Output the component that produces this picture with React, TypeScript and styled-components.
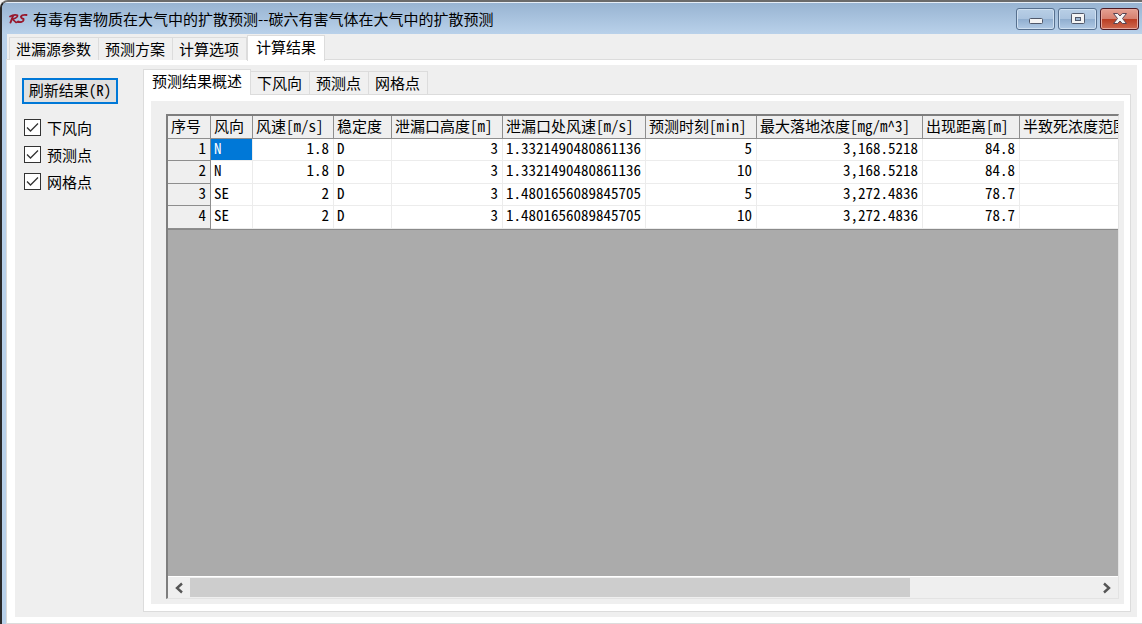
import React, { useState } from "react";
import styled, { createGlobalStyle } from "styled-components";

const sans = `"Noto Sans Mono CJK SC", "Noto Sans CJK SC", sans-serif`;

const GlobalStyle = createGlobalStyle`
  *, *::before, *::after { box-sizing: border-box; }
  body { margin: 0; background: #efefef; }
  button, input { font: inherit; color: inherit; }
`;

const Window = styled.main`
  display: flex;
  flex-direction: column;
  min-height: 100vh;
  border-top: 2px solid #6b6b6b;
  border-left: 2px solid #2a2a2a;
  border-top-left-radius: 8px;
  background: #b9d1ea;
  padding-left: 5px;
  font: 15px/20px ${sans};
  color: #000;
  overflow: hidden;
`;

const TitleBar = styled.header`
  display: flex;
  align-items: center;
  height: 32px;
  margin-left: -5px;
  padding: 1px 3px 0 6px;
  border-top: 1px solid #e6eef7;
  background: linear-gradient(#98b4d2, #b9d1ea);
`;

const Logo = styled.svg`
  flex: none;
  width: 20px;
  height: 14px;
  margin-right: 5px;
`;

const Title = styled.h1`
  flex: 1;
  min-width: 0;
  margin: 0;
  font: 15px/20px "Noto Sans CJK SC", sans-serif;
  white-space: nowrap;
  overflow: hidden;
`;

const Controls = styled.div`
  display: flex;
  gap: 3px;
`;

const WindowButton = styled.button<{ $danger?: boolean }>`
  display: grid;
  place-items: center;
  width: 39px;
  height: 22px;
  padding: 0;
  border: 1px solid ${(p) => (p.$danger ? "#4e1a22" : "#56708f")};
  border-radius: 3px;
  box-shadow: inset 0 0 0 1px ${(p) => (p.$danger ? "#e5a79c" : "#cfe0f1")};
  background: ${(p) =>
    p.$danger
      ? "linear-gradient(#e5a092 0, #d6806f 48%, #b93c22 50%, #cf6a50 100%)"
      : "linear-gradient(#b9cfe6 0, #abc4df 48%, #8fadce 50%, #b1cae5 100%)"};
`;

const Client = styled.div`
  display: flex;
  flex: 1;
  flex-direction: column;
  background: #efefef;
  border-bottom: 1px solid #dcdcdc;
`;

const TabList = styled.div<{ $inner?: boolean }>`
  display: flex;
  align-items: flex-end;
  height: ${(p) => (p.$inner ? 25 : 26)}px;
  padding-left: ${(p) => (p.$inner ? 0 : 2)}px;
`;

const Tab = styled.button<{ $active?: boolean }>`
  height: ${(p) => (p.$active ? 26 : 23)}px;
  margin-bottom: ${(p) => (p.$active ? -1 : 0)}px;
  padding: ${(p) => (p.$active ? "0 8px 4px" : "0 7px 0 6px")};
  border: 1px solid #dcdcdc;
  border-bottom: 0;
  border-left-width: ${(p) => (p.$active ? 1 : 0)}px;
  background: ${(p) => (p.$active ? "#fff" : "#f0f0f0")};
  line-height: 20px;
  white-space: nowrap;
  z-index: ${(p) => (p.$active ? 1 : 0)};
  &:first-child { border-left-width: 1px; }
`;

const OuterPage = styled.section`
  display: flex;
  flex: 1;
  border: solid #fff;
  border-width: 5px 5px 6px 8px;
  outline: 1px solid #dcdcdc;
  background: #efefef;
`;

const Sidebar = styled.aside`
  display: flex;
  flex: none;
  flex-direction: column;
  align-items: flex-start;
  width: 128px;
  padding: 13px 0 0 7px;
`;

const RefreshButton = styled.button`
  width: 96px;
  height: 26px;
  margin-bottom: 10px;
  padding: 0 0 2px;
  border: 2px solid #0078d7;
  background: #e1e1e1;
  line-height: 20px;
  white-space: nowrap;
`;

const CheckLabel = styled.label`
  display: flex;
  align-items: center;
  gap: 6px;
  height: 27px;
  padding-left: 2px;
`;

const CheckBox = styled.input`
  appearance: none;
  width: 17px;
  height: 17px;
  margin: 0;
  border: 1px solid #333;
  background: #fff;
  &:checked {
    background: #fff url("data:image/svg+xml,%3Csvg xmlns='http://www.w3.org/2000/svg' viewBox='0 0 15 15'%3E%3Cpath d='M2 7.5l3.5 3.5L13 3.5' fill='none' stroke='%23333' stroke-width='1.3'/%3E%3C/svg%3E");
  }
`;

const Results = styled.div`
  display: flex;
  flex: 1;
  flex-direction: column;
  min-width: 0;
  padding: 4px 6px 5px 0;
`;

const InnerPage = styled.section`
  display: flex;
  flex: 1;
  min-width: 0;
  padding: 6px 6px 7px 7px;
  border: 1px solid #dcdcdc;
  background: #fff;
`;

const InnerSurface = styled.div`
  display: flex;
  flex: 1;
  min-width: 0;
  padding: 13px 5px 5px 15px;
  background: #efefef;
`;

const Grid = styled.div`
  display: flex;
  flex: 1;
  flex-direction: column;
  min-width: 0;
  border: 2px solid #7e7e7e;
  border-right: 1px solid #e3e3e3;
  border-bottom: 1px solid #e3e3e3;
  background: #ababab;
`;

const GridView = styled.div`
  flex: 1;
  overflow: hidden;
`;

const Table = styled.table`
  width: 1090px;
  table-layout: fixed;
  border-collapse: separate;
  border-spacing: 0;
  border-bottom: 1px solid #8a8a8a;
`;

const HeadCell = styled.th`
  height: 23px;
  padding: 0 0 2px 3px;
  border-right: 1px solid #8e8e8e;
  border-bottom: 1px solid #8e8e8e;
  background: #efefef;
  font-weight: 400;
  text-align: left;
  white-space: nowrap;
  line-height: 20px;
`;

const Row = styled.tr`
  height: 22px;
  &:nth-child(even) { height: 23px; }
`;

const Cell = styled.td<{ $right?: boolean; $selected?: boolean }>`
  padding: 0 4px 3px 3px;
  border-right: 1px solid #ececec;
  border-bottom: 1px solid #ececec;
  background: ${(p) => (p.$selected ? "#0078d7" : "#fff")};
  color: ${(p) => (p.$selected ? "#fff" : "#000")};
  text-align: ${(p) => (p.$right ? "right" : "left")};
  vertical-align: top;
  white-space: nowrap;
  line-height: 18px;
`;

const RowHead = styled(HeadCell)`
  height: auto;
  padding: 0 4px 3px 3px;
  text-align: right;
  vertical-align: top;
  line-height: 18px;
`;

const ScrollBar = styled.div`
  display: flex;
  height: 22px;
  padding: 1px 0;
  border-top: 1px solid #fff;
  background: #efefef;
`;

const ScrollButton = styled.button`
  display: grid;
  place-items: center;
  width: 22px;
  padding: 0;
  border: 0;
  background: none;
`;

const Track = styled.div`
  flex: 1;
`;

const Thumb = styled.div`
  width: 79.5%;
  height: 100%;
  background: #cdcdcd;
`;

const columns = [
  { name: "序号", width: 43 },
  { name: "风向", width: 42 },
  { name: "风速[m/s]", width: 81, right: true },
  { name: "稳定度", width: 58 },
  { name: "泄漏口高度[m]", width: 111, right: true },
  { name: "泄漏口处风速[m/s]", width: 143 },
  { name: "预测时刻[min]", width: 111, right: true },
  { name: "最大落地浓度[mg/m^3]", width: 166, right: true },
  { name: "出现距离[m]", width: 97, right: true },
  { name: "半致死浓度范围", width: 238, right: true },
];

const rows = [
  ["1", "N", "1.8", "D", "3", "1.3321490480861136", "5", "3,168.5218", "84.8", ""],
  ["2", "N", "1.8", "D", "3", "1.3321490480861136", "10", "3,168.5218", "84.8", ""],
  ["3", "SE", "2", "D", "3", "1.4801656089845705", "5", "3,272.4836", "78.7", ""],
  ["4", "SE", "2", "D", "3", "1.4801656089845705", "10", "3,272.4836", "78.7", ""],
];

function Tabs({ names, initial, inner }: { names: string[]; initial: number; inner?: boolean }) {
  const [active, setActive] = useState(initial);
  return (
    <TabList role="tablist" $inner={inner}>
      {names.map((name, i) => (
        <Tab key={name} role="tab" aria-selected={i === active} $active={i === active} onClick={() => setActive(i)}>
          {name}
        </Tab>
      ))}
    </TabList>
  );
}

function Chevron({ d }: { d: string }) {
  return (
    <svg width="10" height="12" viewBox="0 0 10 12" aria-hidden="true">
      <path d={d} fill="none" stroke="#555" strokeWidth="2.4" />
    </svg>
  );
}

export default function App() {
  return (
    <>
      <GlobalStyle />
      <Window>
        <TitleBar>
          <Logo viewBox="0 0 20 14" aria-hidden="true">
            <g fill="none" stroke="#98182c" strokeLinecap="round" strokeLinejoin="round">
              <path d="M5 4L2.500 10.500" strokeWidth="2" />
              <path d="M2 4.500Q6 2 9.500 3.200Q10 5.500 4.500 7.200L8 10.500L11 9.500" strokeWidth="1.700" />
              <path d="M18.500 3Q14 2.500 13 4.500Q12.700 6 15.500 7Q16 9.500 13 10Q10.500 10.500 10 9.500" strokeWidth="1.900" />
            </g>
          </Logo>
          <Title>有毒有害物质在大气中的扩散预测--碳六有害气体在大气中的扩散预测</Title>
          <Controls>
            <WindowButton aria-label="最小化">
              <svg width="16" height="16" viewBox="0 0 16 16">
                <rect x="1.500" y="7.500" width="13" height="5" rx="1" fill="#f4f4f4" stroke="#50586a" />
              </svg>
            </WindowButton>
            <WindowButton aria-label="最大化">
              <svg width="16" height="16" viewBox="0 0 16 16">
                <rect x="1.500" y="2.500" width="13" height="10" rx="1" fill="#f4f4f4" stroke="#50586a" />
                <rect x="5.500" y="6.500" width="5" height="3" fill="#9db6d2" stroke="#50586a" />
              </svg>
            </WindowButton>
            <WindowButton aria-label="关闭" $danger>
              <svg width="16" height="16" viewBox="0 0 16 16">
                <path d="M1.500 2.500h4.200L8 5l2.300-2.500h4.200L10.500 7.500l4 5h-4.200L8 10l-2.300 2.500H1.500l4-5z" fill="#f6f6f6" stroke="#584452" strokeLinejoin="round" />
              </svg>
            </WindowButton>
          </Controls>
        </TitleBar>
        <Client>
          <Tabs names={["泄漏源参数", "预测方案", "计算选项", "计算结果"]} initial={3} />
          <OuterPage>
            <Sidebar>
              <RefreshButton>刷新结果(R)</RefreshButton>
              {["下风向", "预测点", "网格点"].map((name) => (
                <CheckLabel key={name}>
                  <CheckBox type="checkbox" defaultChecked />
                  {name}
                </CheckLabel>
              ))}
            </Sidebar>
            <Results>
              <Tabs inner names={["预测结果概述", "下风向", "预测点", "网格点"]} initial={0} />
              <InnerPage>
                <InnerSurface>
                  <Grid>
                    <GridView>
                      <Table>
                        <colgroup>
                          {columns.map((c) => (
                            <col key={c.name} style={{ width: c.width }} />
                          ))}
                        </colgroup>
                        <thead>
                          <tr>
                            {columns.map((c) => (
                              <HeadCell key={c.name} scope="col">{c.name}</HeadCell>
                            ))}
                          </tr>
                        </thead>
                        <tbody>
                          {rows.map((row, r) => (
                            <Row key={row[0]}>
                              {row.map((value, c) =>
                                c === 0 ? (
                                  <RowHead key={c} scope="row">{value}</RowHead>
                                ) : (
                                  <Cell key={c} $right={columns[c].right} $selected={r === 0 && c === 1}>{value}</Cell>
                                )
                              )}
                            </Row>
                          ))}
                        </tbody>
                      </Table>
                    </GridView>
                    <ScrollBar>
                      <ScrollButton aria-label="向左滚动"><Chevron d="M8 1.500L3 6l5 4.500" /></ScrollButton>
                      <Track><Thumb /></Track>
                      <ScrollButton aria-label="向右滚动"><Chevron d="M2 1.500L7 6l-5 4.500" /></ScrollButton>
                    </ScrollBar>
                  </Grid>
                </InnerSurface>
              </InnerPage>
            </Results>
          </OuterPage>
        </Client>
      </Window>
    </>
  );
}
